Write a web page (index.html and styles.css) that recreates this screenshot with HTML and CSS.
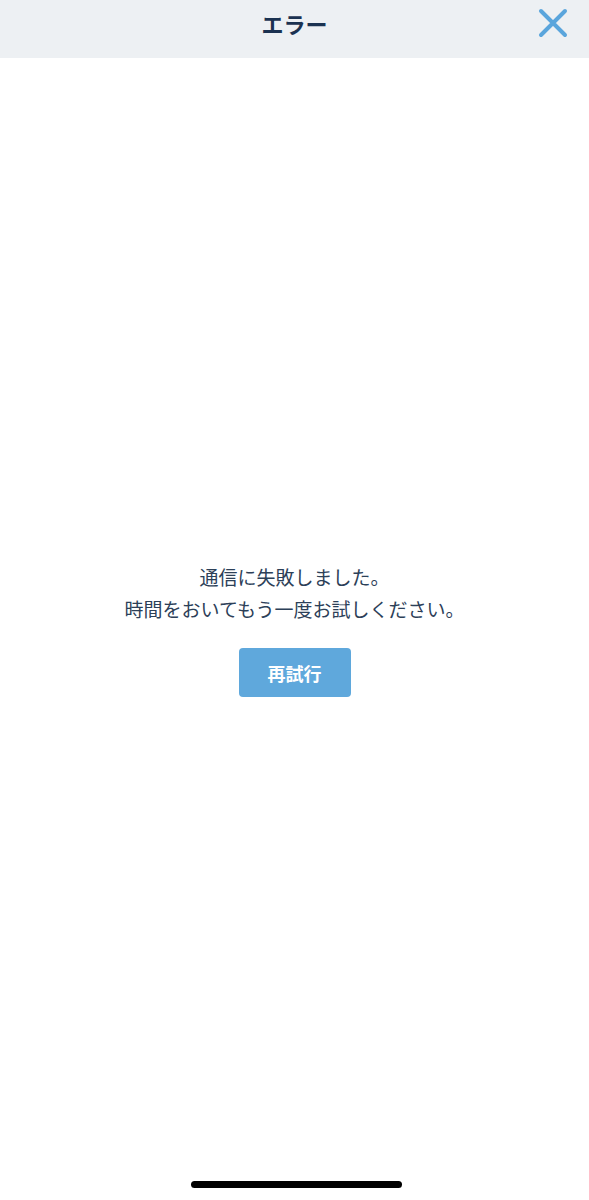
FILE: index.html
```html
<!DOCTYPE html>
<html lang="ja">
<head>
<meta charset="utf-8">
<title>エラー</title>
<link rel="stylesheet" href="styles.css">
</head>
<body>
<div class="screen">
  <header class="header">
    <h1 class="title">エラー</h1>
    <button class="close" aria-label="閉じる">
      <svg width="30" height="30" viewBox="0 0 30 30"><path d="M3 3 L27 27 M27 3 L3 27" stroke="#5aa5dc" stroke-width="4" stroke-linecap="round" fill="none"/></svg>
    </button>
  </header>
  <main class="main">
    <p class="message">通信に失敗しました。<br>時間をおいてもう一度お試しください。</p>
    <button class="retry">再試行</button>
  </main>
  <div class="home-indicator"></div>
</div>
</body>
</html>
```
FILE: styles.css
```css
* { box-sizing: border-box; }
html, body { margin: 0; padding: 0; background: #fff; }
body {
  font-family: "Noto Sans CJK JP", "Noto Sans", sans-serif;
}
.screen {
  position: relative;
  width: 589px;
  height: 1200px;
  display: flex;
  flex-direction: column;
}
.header {
  height: 58px;
  background: #edf0f3;
  display: flex;
  align-items: center;
  justify-content: center;
  position: relative;
  flex-shrink: 0;
}
.title {
  margin: 0;
  font-size: 22px;
  font-weight: 700;
  color: #1b3251;
  line-height: 1;
  margin-top: -12px;
}
.close {
  position: absolute;
  right: 21px;
  top: 8px;
  width: 30px;
  height: 30px;
  padding: 0;
  border: 0;
  background: none;
  display: flex;
}
.main {
  flex: 1;
  display: flex;
  flex-direction: column;
  align-items: center;
  justify-content: center;
}
.message {
  margin: 0;
  text-align: center;
  font-size: 19px;
  line-height: 32px;
  color: #2c4058;
}
.retry {
  margin-top: 23px;
  width: 112px;
  height: 49px;
  border: 0;
  border-radius: 4px;
  background: #5fa8dc;
  color: #fff;
  font-family: "Noto Sans CJK JP", "Noto Sans", sans-serif;
  font-size: 18px;
  font-weight: 700;
  padding: 0;
}
.home-indicator {
  position: absolute;
  left: 191px;
  bottom: 12px;
  width: 211px;
  height: 7px;
  border-radius: 4px;
  background: #000;
}
```
